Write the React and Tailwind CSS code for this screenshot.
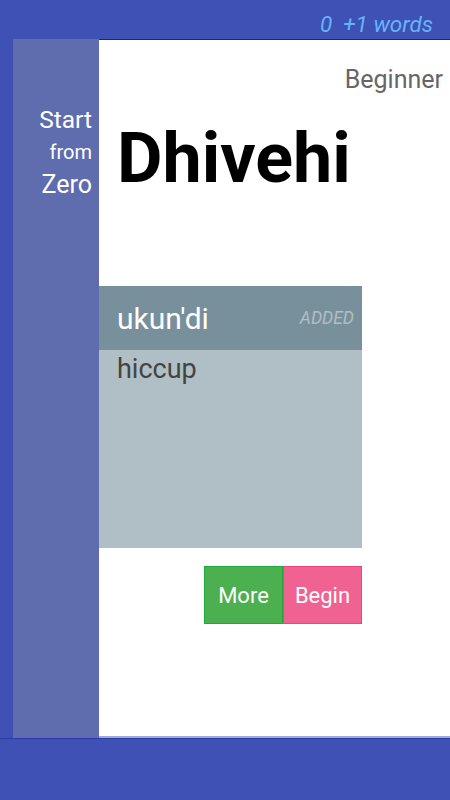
import React from 'react';

export default function App() {
  return (
    <div className="w-[450px] h-[800px] bg-[#3F51B5] flex flex-col font-['Roboto',sans-serif] overflow-hidden">
      {/* Top bar */}
      <div className="h-[39px] flex items-end justify-end pr-[17px] pb-[1px]">
        <span className="italic text-[22.5px] leading-[27px] text-[#64B5F6]">0&nbsp;&nbsp;+1 words</span>
      </div>

      <div className="flex ml-[13px] h-[699px]">
        {/* Sidebar */}
        <div className="w-[86px] bg-[#5F6CAE] flex flex-col items-end pr-[7px] pt-[65px] text-white">
          <span className="text-[24.5px] leading-[32px]">Start</span>
          <span className="text-[20px] leading-[32px]">from</span>
          <span className="text-[25px] leading-[34px]">Zero</span>
        </div>

        {/* Main */}
        <div className="flex-1 bg-white border-t border-[#1A237E] border-b-2 border-b-[#9FA8DA] flex flex-col">
          <div className="flex justify-end pr-[7px] pt-[25px]">
            <span className="text-[25px] leading-[30px] text-[#666666]">Beginner</span>
          </div>
          <div className="pl-[18px] mt-[23px]">
            <span className="font-bold text-[70px] leading-[80px] text-black">Dhivehi</span>
          </div>

          {/* Word card */}
          <div className="mt-[88px] w-[263px] h-[262px] bg-[#B0BEC5] flex flex-col">
            <div className="h-[64px] bg-[#78909C] flex items-center justify-between pl-[18px] pr-[8px]">
              <span className="text-[30px] text-white">ukun'di</span>
              <span className="italic text-[17.5px] text-[#B0BEC5]">ADDED</span>
            </div>
            <div className="pl-[18px] pt-[2px]">
              <span className="text-[27px] leading-[34px] text-[#444444]">hiccup</span>
            </div>
          </div>

          {/* Buttons */}
          <div className="mt-[18px] w-[263px] flex justify-end">
            <div className="w-[79px] h-[58px] bg-[#4CAF50] border border-[#1FAA3A] flex items-center justify-center">
              <span className="text-[22px] text-white">More</span>
            </div>
            <div className="w-[79px] h-[58px] bg-[#F06292] border border-[#E94681] flex items-center justify-center">
              <span className="text-[22px] text-white">Begin</span>
            </div>
          </div>
        </div>
      </div>
      <div className="h-[1px] bg-[#2A3BA8]" />
    </div>
  );
}
